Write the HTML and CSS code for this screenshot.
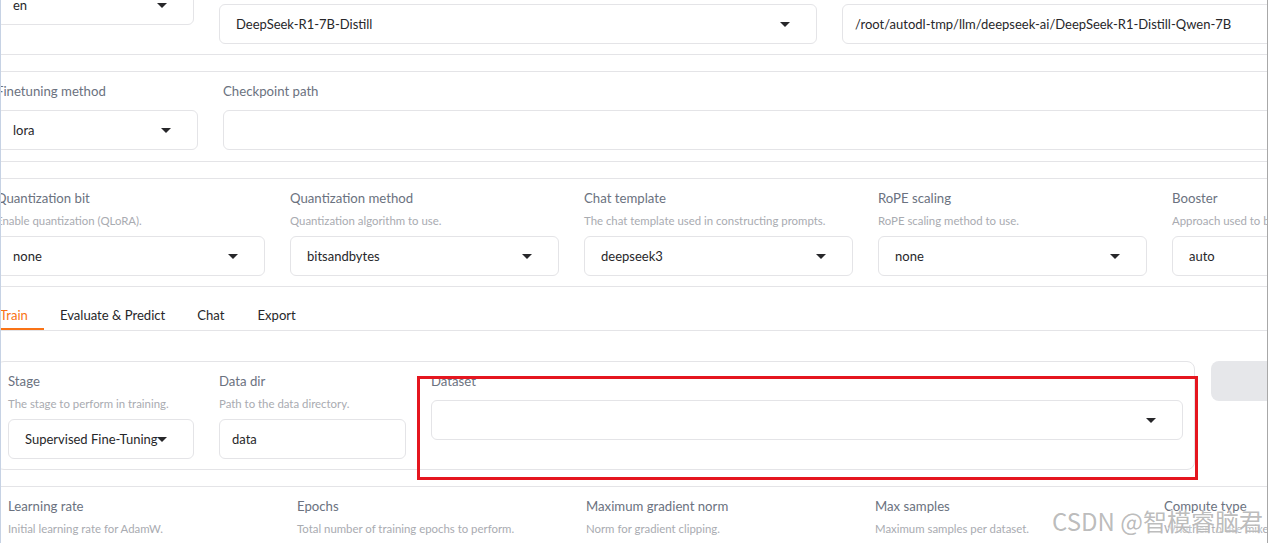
FILE: index.html
```html
<!DOCTYPE html>
<html lang="en">
<head>
<meta charset="utf-8">
<title>LLaMA Board</title>
<link rel="stylesheet" href="styles.css">
</head>
<body>
<div class="viewport">
  <div class="page">
    <section class="row row-top">
      <div class="col col-lang">
        <div class="select"><span class="value">en</span><i class="caret"></i></div>
      </div>
      <div class="col col-model">
        <div class="select"><span class="value">DeepSeek-R1-7B-Distill</span><i class="caret"></i></div>
      </div>
      <div class="col col-path">
        <div class="textbox"><span class="value">/root/autodl-tmp/llm/deepseek-ai/DeepSeek-R1-Distill-Qwen-7B</span></div>
      </div>
    </section>

    <section class="row row-ft">
      <div class="col col-ft">
        <div class="label">Finetuning method</div>
        <div class="select"><span class="value">lora</span><i class="caret"></i></div>
      </div>
      <div class="col col-ckpt">
        <div class="label">Checkpoint path</div>
        <div class="select"></div>
      </div>
    </section>

    <section class="row row-adv">
      <div class="col col-adv">
        <div class="label">Quantization bit</div>
        <div class="info">Enable quantization (QLoRA).</div>
        <div class="select"><span class="value">none</span><i class="caret"></i></div>
      </div>
      <div class="col col-adv">
        <div class="label">Quantization method</div>
        <div class="info">Quantization algorithm to use.</div>
        <div class="select"><span class="value">bitsandbytes</span><i class="caret"></i></div>
      </div>
      <div class="col col-adv">
        <div class="label">Chat template</div>
        <div class="info">The chat template used in constructing prompts.</div>
        <div class="select"><span class="value">deepseek3</span><i class="caret"></i></div>
      </div>
      <div class="col col-adv">
        <div class="label">RoPE scaling</div>
        <div class="info">RoPE scaling method to use.</div>
        <div class="select"><span class="value">none</span><i class="caret"></i></div>
      </div>
      <div class="col col-adv">
        <div class="label">Booster</div>
        <div class="info">Approach used to boost training speed.</div>
        <div class="select"><span class="value">auto</span><i class="caret"></i></div>
      </div>
    </section>

    <nav class="tabs">
      <button class="tab active">Train</button>
      <button class="tab">Evaluate &amp; Predict</button>
      <button class="tab tab-chat">Chat</button>
      <button class="tab">Export</button>
    </nav>

    <div class="train-row">
      <div class="panel">
        <div class="col col-stage">
          <div class="label">Stage</div>
          <div class="info">The stage to perform in training.</div>
          <div class="select"><span class="value">Supervised Fine-Tuning</span><i class="caret"></i></div>
        </div>
        <div class="col col-dir">
          <div class="label">Data dir</div>
          <div class="info">Path to the data directory.</div>
          <div class="textbox"><span class="value">data</span></div>
        </div>
        <div class="col col-dataset">
          <div class="label">Dataset</div>
          <div class="select"><i class="caret"></i></div>
        </div>
      </div>
      <button class="preview-btn"></button>
    </div>

    <section class="row row-params">
      <div class="param">
        <div class="label">Learning rate</div>
        <div class="info">Initial learning rate for AdamW.</div>
      </div>
      <div class="param">
        <div class="label">Epochs</div>
        <div class="info">Total number of training epochs to perform.</div>
      </div>
      <div class="param">
        <div class="label">Maximum gradient norm</div>
        <div class="info">Norm for gradient clipping.</div>
      </div>
      <div class="param">
        <div class="label">Max samples</div>
        <div class="info">Maximum samples per dataset.</div>
      </div>
      <div class="param">
        <div class="label">Compute type</div>
        <div class="info">Whether to use mixed precision training.</div>
      </div>
    </section>
  </div>

  <div class="annotation"></div>
  <div class="watermark">CSDN @智模睿脑君</div>
</div>
</body>
</html>
```

FILE: styles.css
```css
* {
  box-sizing: border-box;
}

html, body {
  margin: 0;
  padding: 0;
  background: #ffffff;
}

body {
  font-family: "Lato", "Noto Sans", sans-serif;
  color: #27272a;
}

.viewport {
  position: relative;
  width: 1268px;
  height: 543px;
  overflow: hidden;
  border-left: 1px solid #c6d2e4;
  border-right: 1px solid #a8a8a8;
  background: #ffffff;
}

.page {
  width: 1445px;
  margin-left: -5px;
}

/* generic rows */
.row {
  display: flex;
  gap: 25px;
  border-top: 1px solid #e4e4e7;
  border-bottom: 1px solid #e4e4e7;
  padding: 9px 0 10px;
  margin-top: 16px;
}

.row-top {
  border-top: none;
  margin-top: 0;
  padding-top: 4px;
  align-items: flex-start;
}

.row-ft {
  padding-bottom: 11px;
}

.col {
  display: flex;
  flex-direction: column;
  min-width: 0;
}

.col-lang { flex: 0 0 198px; margin-top: -19px; }
.col-model { flex: 0 0 598px; }
.col-path { flex: 0 0 599px; }

.col-ft { flex: 0 0 202px; }
.col-ckpt { flex: 0 0 1218px; }

.col-adv { flex: 0 0 269px; }

.label {
  font-size: 13.2px;
  line-height: 20px;
  color: #6b7280;
  white-space: nowrap;
}

.info {
  font-size: 11.4px;
  line-height: 16px;
  color: #a9abb1;
  margin-top: 5px;
  margin-bottom: 7px;
  white-space: nowrap;
}

.label + .select,
.label + .textbox {
  margin-top: 9px;
}

.select,
.textbox {
  position: relative;
  height: 40px;
  border: 1px solid #e4e4e7;
  border-radius: 6px;
  background: #ffffff;
  display: flex;
  align-items: center;
  padding-left: 16px;
  font-size: 13px;
  color: #27272a;
  white-space: nowrap;
  overflow: hidden;
}

.textbox {
  padding-left: 12px;
}

.value {
  line-height: 20px;
}

.caret {
  position: absolute;
  right: 26px;
  top: 50%;
  margin-top: -2px;
  width: 0;
  height: 0;
  border-left: 5px solid transparent;
  border-right: 5px solid transparent;
  border-top: 5px solid #27272a;
}

/* tabs */
.tabs {
  display: flex;
  border-bottom: 1px solid #e4e4e7;
  margin-left: -12px;
}

.tab {
  font-family: inherit;
  font-size: 13.1px;
  line-height: 20px;
  color: #27272a;
  background: none;
  border: none;
  padding: 18px 16px 5px;
  margin: 0;
  cursor: pointer;
}

.tab-chat {
  padding-right: 17px;
}

.tab.active {
  color: #f97316;
  box-shadow: inset 0 -2px 0 #f97316;
}

/* train tab */
.train-row {
  display: flex;
  gap: 16px;
  margin-top: 30px;
  align-items: flex-start;
}

.panel {
  flex: 0 0 1199px;
  display: flex;
  gap: 25px;
  border: 1px solid #e4e4e7;
  border-radius: 8px;
  padding: 9px 11px 10px;
}

.col-stage { flex: 0 0 186px; }
.col-dir { flex: 0 0 187px; }
.col-dataset { flex: 0 0 752px; }

.preview-btn {
  flex: 1 1 auto;
  height: 40px;
  border: none;
  border-radius: 8px;
  background: #e6e7ea;
}

/* parameter row */
.row-params {
  gap: 0;
  border-bottom: none;
}

.param {
  flex: 0 0 289px;
  padding: 0 12px;
}

/* overlays */
.annotation {
  position: absolute;
  left: 416px;
  top: 376px;
  width: 781px;
  height: 104px;
  border: 3px solid #e5161f;
  pointer-events: none;
}

.watermark {
  position: absolute;
  left: 1051px;
  top: 508px;
  font-family: "Noto Sans CJK SC", "Noto Sans", sans-serif;
  font-size: 24px;
  line-height: 26px;
  color: rgba(150, 150, 150, 0.65);
  text-shadow: 0 0 2px #ffffff, 0 0 2px #ffffff;
  white-space: nowrap;
  pointer-events: none;
}
```
